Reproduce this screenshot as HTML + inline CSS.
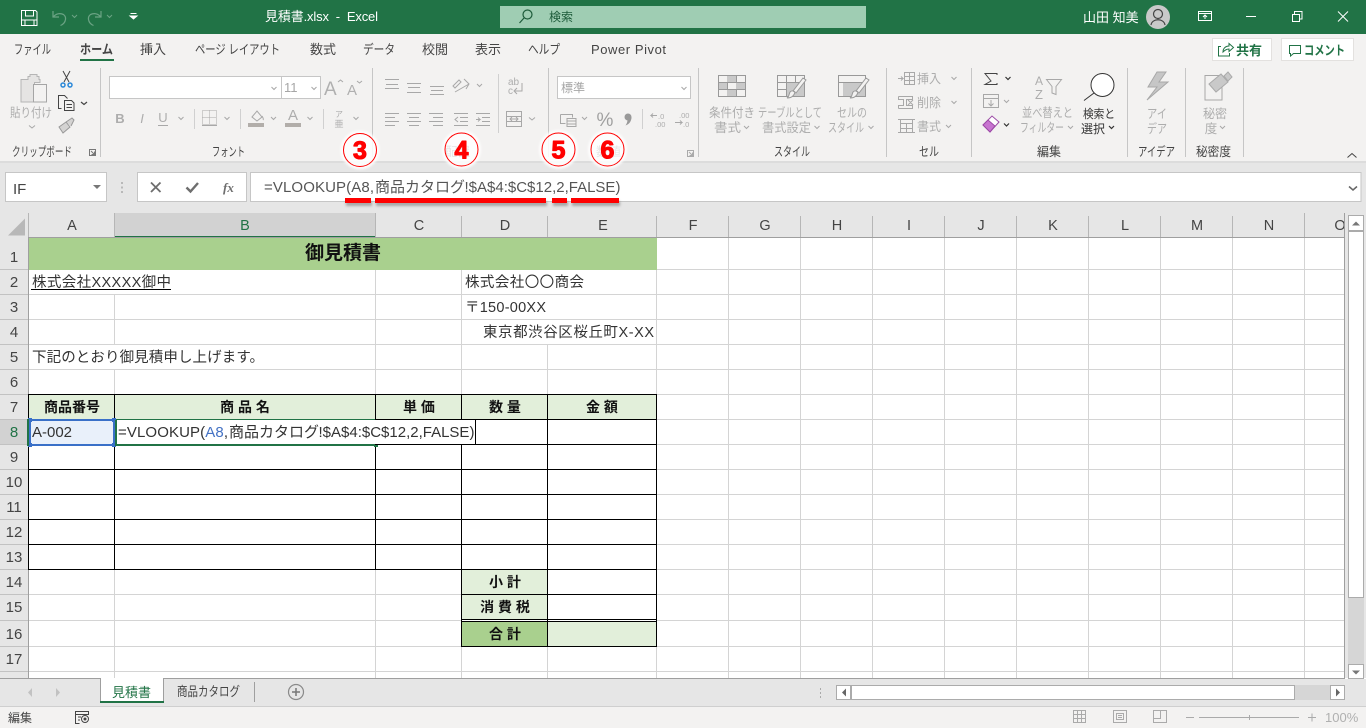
<!DOCTYPE html>
<html lang="ja"><head><meta charset="utf-8"><title>見積書.xlsx - Excel</title>
<style>
html,body{margin:0;padding:0;width:1366px;height:728px;overflow:hidden;background:#fff}
svg{display:block;font-family:"Liberation Sans","Noto Sans CJK JP",sans-serif}
.r{font-size:13px;fill:#444}
.d{font-size:12.500px;fill:#adadad}
.g{font-size:12.500px;fill:#444}
.c{font-size:14.500px;fill:#333}
.h{font-size:14px;font-weight:bold;fill:#111;text-anchor:middle}
.n{font-size:15px;fill:#444;text-anchor:middle}
.m{text-anchor:middle}
.i{fill:none;stroke:#a8a8a8;stroke-width:1}
.k{fill:none;stroke:#444;stroke-width:1}
.v{fill:none;stroke:#999;stroke-width:1}
.b{font-size:25px;font-weight:bold;fill:#f00;stroke:#f00;stroke-width:1.100;stroke-linejoin:round;text-anchor:middle}
</style></head><body>
<svg width="1366" height="728" viewBox="0 0 1366 728" xmlns="http://www.w3.org/2000/svg">
<defs>
<filter id="glow" x="-30%" y="-30%" width="160%" height="160%"><feGaussianBlur stdDeviation="1"/></filter>
<filter id="sh" x="-10%" y="-100%" width="120%" height="400%"><feGaussianBlur stdDeviation="1.200"/></filter>
</defs>
<rect width="1366" height="728" fill="#fff"/>
<!-- title bar -->
<rect width="1366" height="34" fill="#217346"/>
<path d="M21.500 10.500h14l1.500 1.500v13.500h-15.500zM25.500 10.500v5.500h8v-5.500M25 25.500v-5.500h9v5.500M21.500 20h16" fill="none" stroke="#fff"/>
<path d="M53 11v6h6M53.500 16.500c5-5 13-3 12 3-.5 3-2.500 5-5 6" fill="none" stroke="#6ba384" stroke-width="1.200"/>
<path d="M72 15l2.500 2.500 2.500-2.500M107 15l2.500 2.500 2.500-2.500" fill="none" stroke="#6ba384"/>
<path d="M101 11v6h-6M100.500 16.500c-5-5-13-3-12 3 .5 3 2.500 5 5 6" fill="none" stroke="#6ba384" stroke-width="1.200"/>
<path d="M130.500 13.500h6M130 16l3.500 3 3.500-3z" fill="#fff" stroke="#fff"/>
<text x="265" y="21" font-size="13" fill="#fff" textLength="113">見積書.xlsx&#160;&#160;-&#160;&#160;Excel</text>
<rect x="500" y="6" width="366" height="22" fill="#9fcdb3"/>
<circle cx="527.500" cy="14.500" r="4.500" fill="none" stroke="#1d5b3a" stroke-width="1.200"/>
<path d="M524 18l-4.500 5" stroke="#1d5b3a" stroke-width="1.200"/>
<text x="549" y="21" font-size="12" fill="#1d5b3a">検索</text>
<text x="1083" y="22" font-size="13" fill="#fff">山田&#160;知美</text>
<circle cx="1158" cy="17" r="12" fill="#c9c9c9"/>
<circle cx="1158" cy="14" r="4.500" fill="none" stroke="#444" stroke-width="1.200"/>
<path d="M1151 25c1-7 13-7 14 0" fill="none" stroke="#444" stroke-width="1.200"/>
<path d="M1198.500 11.500h13v9h-13zM1198.500 13.500h13M1205 19v-4M1203 17l2-2 2 2" fill="none" stroke="#fff"/>
<path d="M1246 16.500h10" stroke="#fff"/>
<path d="M1292.500 14.500h7v7h-7zM1294.500 14v-2.500h7.500v7.500h-2.500" fill="none" stroke="#fff"/>
<path d="M1338 11.500l10 10M1348 11.500l-10 10" stroke="#fff" stroke-width="1"/>
<!-- ribbon -->
<rect y="34" width="1366" height="128" fill="#f3f2f1"/>
<rect y="161" width="1366" height="52" fill="#e6e6e6"/>
<rect y="161" width="1366" height="2" fill="#dcdcdc"/>
<text x="14" y="54" class="r" textLength="37" lengthAdjust="spacingAndGlyphs">ファイル</text>
<text x="80" y="54" class="r" style="font-weight:bold" textLength="33" lengthAdjust="spacingAndGlyphs">ホーム</text>
<rect x="80" y="59" width="34" height="2" fill="#217346"/>
<text x="140" y="54" class="r">挿入</text>
<text x="195" y="54" class="r" textLength="85" lengthAdjust="spacingAndGlyphs">ページ レイアウト</text>
<text x="310" y="54" class="r">数式</text>
<text x="363" y="54" class="r" textLength="32" lengthAdjust="spacingAndGlyphs">データ</text>
<text x="422" y="54" class="r">校閲</text>
<text x="475" y="54" class="r">表示</text>
<text x="528" y="54" class="r" textLength="32" lengthAdjust="spacingAndGlyphs">ヘルプ</text>
<text x="591" y="54" class="r" textLength="75">Power Pivot</text>
<rect x="1212.500" y="38.500" width="59" height="22" fill="#fff" stroke="#e3e1df"/>
<path d="M1221 46.500h-2.500v9.500h11v-3M1223 52c0-4 3-6 6-6v-2.500l4.500 4-4.500 4v-2.500c-2 0-4 1-6 3z" fill="none" stroke="#217346"/>
<text x="1236" y="55" font-size="13" font-weight="bold" fill="#217346">共有</text>
<rect x="1281.500" y="38.500" width="72" height="22" fill="#fff" stroke="#e3e1df"/>
<path d="M1289.500 45.500h11v8h-7l-3 2.500v-2.500h-1z" fill="none" stroke="#217346"/>
<text x="1304" y="55" font-size="13" font-weight="bold" fill="#217346" textLength="41" lengthAdjust="spacingAndGlyphs">コメント</text>
<path d="M100.500 68v89M372.500 68v89M548.500 68v89M698.500 68v89M886.500 68v89M971.500 68v89M1127.500 68v89M1185.500 68v89M1243.500 68v89" stroke="#c6c6c6"/>
<path d="M194.500 109v20M240.500 109v20M323.500 109v20M498.500 74v59M642.500 109v20" stroke="#d0d0d0"/>
<!-- clipboard -->
<path d="M21 79.500h7v-3h2v-2h7v2h2v3h1v3h-5.500v19.500h-13.500z" fill="#e5e4e3" stroke="#b5b5b5"/>
<rect x="33.500" y="84.500" width="13" height="17.500" fill="#f3f2f1" stroke="#a5a5a5"/>
<text x="31" y="117" class="d m" textLength="42" lengthAdjust="spacingAndGlyphs">貼り付け</text>
<path d="M29 125.500l3 2.500 3-2.500" class="i"/>
<path d="M63 71l6 11M70 71l-6 11" stroke="#444" fill="none"/>
<circle cx="63" cy="85" r="2" fill="none" stroke="#2b88d8" stroke-width="1.500"/><circle cx="70" cy="85" r="2" fill="none" stroke="#2b88d8" stroke-width="1.500"/>
<path d="M61.500 108.500h-3v-13h6l3 3M64.500 100.500h7l2.500 2.500v7.500h-9.500zM66.500 104.500h5.500M66.500 107.500h5.500" class="k"/>
<path d="M81 102l3 2.500 3-2.500" stroke="#444" fill="none" stroke-width="1.200"/>
<path d="M59 127l4 6 7-6-4-5zM66 122l6-4 2 2-3 6" fill="#d4d3d2" stroke="#999"/>
<text x="12" y="156" class="g" textLength="60" lengthAdjust="spacingAndGlyphs">クリップボード</text>
<path d="M89.500 149.500h6v6h-6zM91 151l3 3M94.500 151.500v3h-3" stroke="#777" fill="none"/>
<!-- font -->
<rect x="109.500" y="76.500" width="172" height="22" fill="#fff" stroke="#c6c6c6"/>
<rect x="281.500" y="76.500" width="39" height="22" fill="#fff" stroke="#c6c6c6"/>
<path d="M271.500 87l2.500 2.500 2.500-2.500M311.500 87l2.500 2.500 2.500-2.500" class="i"/>
<text x="284" y="92" font-size="13" fill="#a6a6a6">11</text>
<text x="324" y="95" font-size="19" fill="#b0b0b0">A</text><path d="M338 82l2.500-2 2.500 2" class="i"/>
<text x="347" y="95" font-size="15" fill="#b0b0b0">A</text><path d="M357 81l2.500 2 2.500-2" class="i"/>
<text x="120" y="123" font-size="13" font-weight="bold" fill="#adadad" style="text-anchor:middle">B</text>
<text x="142" y="123" font-size="13" font-style="italic" fill="#adadad" style="text-anchor:middle">I</text>
<text x="163" y="122" font-size="13" fill="#adadad" style="text-anchor:middle">U</text><path d="M158 125.500h10" class="i"/>
<path d="M178.500 117l2.500 2.500 2.500-2.500M224.500 117l2.500 2.500 2.500-2.500M271 117l2.500 2.500 2.500-2.500M307.500 117l2.500 2.500 2.500-2.500M353.500 117l2.500 2.500 2.500-2.500" class="i"/>
<path d="M202.500 110.500h14v14h-14zM209.500 110.500v14M202.500 117.500h14" class="i" stroke-dasharray="1 1"/><path d="M202 125.500h15" class="i"/>
<path d="M252 117l5-6 5 6-5 4zM262 116c1 2 2 3 1 4" class="i" stroke="#999"/><rect x="248" y="123" width="16" height="4" fill="#b2aeaa"/>
<text x="293" y="120" font-size="15" fill="#adadad" style="text-anchor:middle">A</text><rect x="285" y="123" width="16" height="4" fill="#b2aeaa"/>
<text x="339" y="117" font-size="8" fill="#adadad" style="text-anchor:middle">ア</text><text x="339" y="127" font-size="9" fill="#adadad" style="text-anchor:middle">亜</text>
<text x="212" y="156" class="g" textLength="33" lengthAdjust="spacingAndGlyphs">フォント</text>
<!-- alignment -->
<path d="M385 79.500h14M386 84.500h12M385 88.500h14M407 83.500h14M408 87.500h12M407 92.500h14M430 86.500h14M431 90.500h12M430 94.500h14" class="i"/>
<path d="M385 113.500h14M385 117.500h10M385 121.500h14M385 125.500h10M407 113.500h14M409 117.500h10M407 121.500h14M409 125.500h10M429 113.500h14M433 117.500h10M429 121.500h14M433 125.500h10" class="i"/>
<path d="M454 113.500h14M460 117.500h8M460 121.500h8M454 125.500h14M458 117l-3 2.500 3 2.500M476 113.500h14M482 117.500h8M482 121.500h8M476 125.500h14M476 119.500h4l-2-2m2 2l-2 2" class="i"/>
<path d="M455 92l14-8M464 79l5 5-3 5M453 86l6-6 2 2-6 6z" class="i"/><path d="M477 84l2.500 2.500 2.500-2.500" class="i"/>
<text x="508" y="85" font-size="10" fill="#adadad">ab</text><text x="508" y="94" font-size="10" fill="#adadad">c</text><path d="M522 83v8h-7M517 88l-3 3 3 3" class="i"/>
<path d="M506.500 111.500h15v15h-15zM506.500 116.500h15M506.500 121.500h15M510 119h8M512 117l-2 2 2 2M516 117l2 2-2 2" class="i"/>
<path d="M529 117.500l3 2.500 3-2.500" class="i"/>
<text x="445" y="156" class="g">配置</text>
<!-- number -->
<rect x="557.500" y="76.500" width="133" height="22" fill="#fff" stroke="#c6c6c6"/>
<text x="561" y="92" font-size="12" fill="#a6a6a6">標準</text>
<path d="M681.500 87l2.500 2.500 2.500-2.500" class="i"/>
<path d="M560.500 114.500h12v3M560.500 114.500v9h5M567 118.500h9v8h-9zM567 121h9M567 124h9" class="i"/>
<path d="M582 117l2.500 2.500 2.500-2.500" class="i"/>
<text x="605" y="126" font-size="19" fill="#a0a0a0" style="text-anchor:middle">%</text>
<circle cx="628" cy="117" r="3.500" fill="#999"/><path d="M631.500 117c0 4-2 7-6 8.500 1.500-2 2-4 2-6z" fill="#999"/>
<text x="658" y="119" font-size="7.500" fill="#adadad">.0</text><text x="655" y="127" font-size="7.500" fill="#adadad">.00</text><path d="M657 115.500h-6l2-2m-2 2l2 2" class="i"/>
<text x="679" y="118" font-size="7.500" fill="#adadad">.00</text><text x="683" y="127" font-size="7.500" fill="#adadad">.0</text><path d="M675 122.500h7l-2-2m2 2l-2 2" class="i"/>
<text x="596" y="156" class="g">数値</text>
<path d="M687.500 150.500h6v6h-6zM689 152l3 3M692.500 152.500v3h-3" stroke="#aaa" fill="none"/>
<!-- styles -->
<path d="M718.500 75.500h27v21h-27zM718.500 82.500h27M718.500 89.500h27M727.500 75.500v21M736.500 75.500v21" class="v"/><path d="M727 76h9v6h-9zM736 83h9v6h-9zM719 83h8v6h-8zM727 90h9v6h-9z" fill="#c9c9c9"/>
<path d="M777.500 75.500h27v21h-27zM777.500 82.500h27M777.500 89.500h27M786.500 75.500v21M795.500 75.500v21" class="v"/><rect x="787" y="83" width="17" height="13" fill="#c9c9c9"/>
<path d="M838.500 75.500h27v21h-27zM838.500 82.500h27" class="v"/><rect x="843" y="83" width="22" height="13" fill="#c9c9c9"/>
<path d="M806 80l-10 13-3-2 10-13zM795 92c-1 4-4 6-8 6 2-1 2-4 3-6 2-2 4-1 5 0zM869 80l-10 13-3-2 10-13zM858 92c-1 4-4 6-8 6 2-1 2-4 3-6 2-2 4-1 5 0z" fill="#f3f2f1" stroke="#999"/>
<text x="732" y="117" class="d m" textLength="46" lengthAdjust="spacingAndGlyphs">条件付き</text><text x="727.500" y="132" class="d m" textLength="27" lengthAdjust="spacingAndGlyphs">書式</text><path d="M744 126l2.500 2.500 2.500-2.500" class="i"/>
<text x="790" y="117" class="d m" textLength="64" lengthAdjust="spacingAndGlyphs">テーブルとして</text><text x="786.500" y="132" class="d m" textLength="49" lengthAdjust="spacingAndGlyphs">書式設定</text><path d="M814.500 126l2.500 2.500 2.500-2.500" class="i"/>
<text x="852" y="117" class="d m" textLength="30" lengthAdjust="spacingAndGlyphs">セルの</text><text x="846" y="132" class="d m" textLength="36" lengthAdjust="spacingAndGlyphs">スタイル</text><path d="M868.500 126l2.500 2.500 2.500-2.500" class="i"/>
<text x="774" y="156" class="g" textLength="36" lengthAdjust="spacingAndGlyphs">スタイル</text>
<!-- cells -->
<path d="M904.500 72.500h10v12h-10zM904.500 76.500h10M904.500 80.500h10M909.500 72.500v12M898 78.500h5l-2-2m2 2l-2 2" class="i"/>
<path d="M898.500 96.500h14v3h-6v6h6v3h-14M898.500 96.500v3h5v6h-5v3M908 100l5 5M913 100l-5 5" class="i"/>
<path d="M900.500 119.500h12v13h-12zM900.500 123.500h12M900.500 128.500h12M906.500 123.500v9M898 119.500h17M898 132.500h17" class="i"/>
<text x="917" y="83" class="d" textLength="24" lengthAdjust="spacingAndGlyphs">挿入</text><text x="917" y="107" class="d" textLength="24" lengthAdjust="spacingAndGlyphs">削除</text><text x="917" y="131" class="d" textLength="24" lengthAdjust="spacingAndGlyphs">書式</text>
<path d="M951.500 77l2.500 2.500 2.500-2.500M951.500 101l2.500 2.500 2.500-2.500M946 125l2.500 2.500 2.500-2.500" class="i"/>
<text x="919" y="156" class="g" textLength="20" lengthAdjust="spacingAndGlyphs">セル</text>
<!-- editing -->
<path d="M997 75v-1.500h-12l6 7.500-6 3.500h12v-1.500" class="k"/>
<path d="M1005.500 77l2.500 2.500 2.500-2.500" stroke="#333" fill="none" stroke-width="1.200"/>
<path d="M983.500 94.500h15v13h-15zM983.500 98.500h15M991 100v6M988.500 103.500l2.500 2.500 2.500-2.500" class="i"/><path d="M1004 100l2.500 2.500 2.500-2.500" class="i"/>
<path d="M983 125l9-9 7 6-9 10z" fill="#fff" stroke="#9c4aa6"/><path d="M983 125l5-5 7 6-5 6z" fill="#c774d0" stroke="#9c4aa6"/>
<path d="M1004 123.500l2.500 2.500 2.500-2.500" stroke="#333" fill="none" stroke-width="1.200"/>
<text x="1039" y="85" font-size="12" fill="#adadad" style="text-anchor:middle">A</text><text x="1039" y="99" font-size="13" fill="#adadad" style="text-anchor:middle">Z</text>
<path d="M1046.500 79.500h15l-5.500 7v8l-4-1.500v-6.500z" class="i"/>
<text x="1047.500" y="117" class="d m" textLength="51" lengthAdjust="spacingAndGlyphs">並べ替えと</text><text x="1042" y="132" class="d m" textLength="44" lengthAdjust="spacingAndGlyphs">フィルター</text><path d="M1068 126l2.500 2.500 2.500-2.500" class="i"/>
<circle cx="1102.500" cy="85" r="11.500" fill="#fff" stroke="#333" stroke-width="1"/><path d="M1094 93l-10 7.500" stroke="#333"/>
<text x="1099" y="118" font-size="12" fill="#333" style="text-anchor:middle" textLength="32" lengthAdjust="spacingAndGlyphs">検索と</text><text x="1093" y="133" font-size="12" fill="#333" style="text-anchor:middle">選択</text><path d="M1109 126l2.500 2.500 2.500-2.500" stroke="#333" fill="none" stroke-width="1.200"/>
<text x="1037" y="156" class="g" textLength="24" lengthAdjust="spacingAndGlyphs">編集</text>
<!-- ideas -->
<path d="M1157 72l-9 15h9l-10 13 21-18h-9l7-10z" fill="#c6c6c6" stroke="#a8a8a8"/>
<text x="1157" y="118" class="d m" textLength="20" lengthAdjust="spacingAndGlyphs">アイ</text><text x="1157" y="133" class="d m" textLength="20" lengthAdjust="spacingAndGlyphs">デア</text>
<text x="1138" y="156" class="g" textLength="37" lengthAdjust="spacingAndGlyphs">アイデア</text>
<!-- sensitivity -->
<path d="M1205 75.500h17v24.500h-17z" class="i"/>
<path d="M1209 84l12-10 7 8-12 10z" fill="#c9c9c9" stroke="#aaa"/><path d="M1224 76l4-4 4 5-4 4z" fill="#c9c9c9" stroke="#aaa"/>
<text x="1215" y="118" class="d m" textLength="24" lengthAdjust="spacingAndGlyphs">秘密</text><text x="1211" y="133" class="d m">度</text><path d="M1220 126l2.500 2.500 2.500-2.500" class="i"/>
<text x="1196" y="156" class="g" textLength="35" lengthAdjust="spacingAndGlyphs">秘密度</text>
<path d="M1347.500 157.500l4.500-4 4.500 4" stroke="#444" fill="none"/>
<!-- formula bar -->
<rect x="5.500" y="172.500" width="101" height="29" fill="#fff" stroke="#c6c6c6"/>
<text x="13" y="194" font-size="15" fill="#444">IF</text>
<path d="M93 185h8l-4 4z" fill="#777"/>
<path d="M122 182v2M122 186.500v2M122 191v2" stroke="#aaa" stroke-width="1.500"/>
<rect x="137.500" y="172.500" width="109" height="29" fill="#fff" stroke="#c6c6c6"/>
<path d="M151 182.500l9.500 9.500M160.500 182.500l-9.500 9.500" stroke="#6e6e6e" stroke-width="1.800"/>
<path d="M186.500 187.500l4 4 7.500-8.500" stroke="#6e6e6e" stroke-width="2.400" fill="none"/>
<text x="223" y="192" font-size="13" font-style="italic" font-weight="bold" fill="#6e6e6e" font-family="Liberation Serif">fx</text>
<rect x="250.500" y="172.500" width="1110.500" height="29" fill="#fff" stroke="#c6c6c6"/>
<text x="264" y="192" font-size="15" fill="#555" textLength="110">=VLOOKUP(A8,</text>
<text x="375" y="192" font-size="15" fill="#555">商品カタログ</text>
<text x="464.500" y="192" font-size="15" fill="#555">!$A$4:$C$12,2,FALSE)</text>
<path d="M1349 186.500l4 3.500 4-3.500" stroke="#666" stroke-width="1.500" fill="none"/>
<!-- headers -->
<rect y="213" width="1345" height="25" fill="#e6e6e6"/>
<rect y="238" width="29" height="441" fill="#e6e6e6"/>
<rect x="115" y="213" width="261" height="24" fill="#d2d2d2"/>
<rect x="115" y="236" width="261" height="2" fill="#217346"/>
<rect y="420" width="28" height="25" fill="#d2d2d2"/>
<path d="M25 218.500v17h-17z" fill="#b8b8b8"/>
<path d="M28.500 213v24M114.500 213v24M375.500 213v24M461.500 216v21M547.500 216v21M656.500 216v21M728.500 216v21M800.500 216v21M872.500 216v21M944.500 216v21M1016.500 216v21M1088.500 216v21M1160.500 216v21M1232.500 216v21M1304.500 213v24" stroke="#b6b6b6"/>
<path d="M0 269.500h28M0 294.500h28M0 319.500h28M0 344.500h28M0 369.500h28M0 394.500h28M0 419.500h28M0 444.500h28M0 469.500h28M0 494.500h28M0 519.500h28M0 544.500h28M0 569.500h28M0 594.500h28M0 620.500h28M0 646.500h28M0 671.500h28" stroke="#c2c2c2"/>
<path d="M28.500 237v441M29 237.500h1316" stroke="#9f9f9f"/>
<g font-size="14.500" fill="#444" text-anchor="middle">
<text x="72" y="230">A</text><text x="245" y="230" fill="#217346">B</text><text x="419" y="230">C</text><text x="505" y="230">D</text><text x="603" y="230">E</text><text x="693" y="230">F</text><text x="765" y="230">G</text><text x="837" y="230">H</text><text x="909" y="230">I</text><text x="981" y="230">J</text><text x="1053" y="230">K</text><text x="1125" y="230">L</text><text x="1197" y="230">M</text><text x="1269" y="230">N</text><text x="1340" y="230">O</text>
</g>
<text x="14" y="262" class="n">1</text><text x="14" y="287" class="n">2</text><text x="14" y="312" class="n">3</text><text x="14" y="337" class="n">4</text><text x="14" y="362" class="n">5</text><text x="14" y="387" class="n">6</text><text x="14" y="412" class="n">7</text><text x="14" y="437" class="n" style="fill:#217346">8</text><text x="14" y="462" class="n">9</text><text x="14" y="487" class="n">10</text><text x="14" y="512" class="n">11</text><text x="14" y="537" class="n">12</text><text x="14" y="562" class="n">13</text><text x="14" y="587" class="n">14</text><text x="14" y="612" class="n">15</text><text x="14" y="639" class="n">16</text><text x="14" y="664" class="n">17</text>
<!-- fills -->
<rect x="29" y="238" width="628" height="32" fill="#a9d08e"/>
<rect x="29" y="395" width="628" height="24" fill="#e2efda"/>
<rect x="462" y="570" width="86" height="50" fill="#e2efda"/>
<rect x="462" y="621" width="86" height="25" fill="#a9d08e"/>
<rect x="548" y="621" width="109" height="25" fill="#e2efda"/>
<!-- gridlines -->
<path d="M657 269.500h688M29 294.500h1316M29 319.500h1316M29 344.500h1316M29 369.500h1316M29 394.500h1316M657 419.500h688M657 444.500h688M657 469.500h688M657 494.500h688M657 519.500h688M657 544.500h688M657 569.500h688M29 594.500h432M657 594.500h688M29 620.500h432M657 620.500h688M29 646.500h432M657 646.500h688M29 671.500h1316" stroke="#d4d4d4"/>
<path d="M114.500 295v50M114.500 370v25M114.500 570v108M375.500 270v125M375.500 570v108M461.500 270v125M461.500 646v32M547.500 345v50M547.500 646v32M656.500 270v125M656.500 646v32M728.500 238v440M800.500 238v440M872.500 238v440M944.500 238v440M1016.500 238v440M1088.500 238v440M1160.500 238v440M1232.500 238v440M1304.500 238v440" stroke="#d4d4d4"/>
<path d="M1344.500 213v465" stroke="#9f9f9f"/>
<!-- black table -->
<path d="M29 394.500h628M29 419.500h628M29 444.500h628M29 469.500h628M29 494.500h628M29 519.500h628M29 544.500h628M29 569.500h628M461 594.500h196M461 619.500h196M461 621.500h196M461 646.500h196M114.500 394v176M375.500 394v176M461.500 394v253M547.500 394v253M656.500 394v253M28.500 394v176" stroke="#000"/>
<!-- cell text -->
<text x="343" y="259" font-size="19" font-weight="bold" fill="#111" text-anchor="middle">御見積書</text>
<text x="32" y="287" class="c" textLength="139">株式会社XXXXX御中</text><path d="M31 289.500h140" stroke="#000"/>
<text x="465" y="287" class="c" textLength="119">株式会社〇〇商会</text>
<text x="465" y="312" class="c" textLength="81">〒150-00XX</text>
<text x="483" y="337" class="c" textLength="171">東京都渋谷区桜丘町X-XX</text>
<text x="32" y="362" class="c" textLength="232">下記のとおり御見積申し上げます。</text>
<text x="72" y="412" class="h">商品番号</text><text x="245" y="412" class="h">商 品 名</text><text x="419" y="412" class="h">単 価</text><text x="505" y="412" class="h">数 量</text><text x="602" y="412" class="h">金 額</text>
<text x="505" y="587" class="h">小 計</text><text x="505" y="612" class="h">消 費 税</text><text x="505" y="639" class="h">合 計</text>
<!-- edit -->
<rect x="30" y="420" width="84" height="24" fill="#e9f0fa"/>
<rect x="30" y="419" width="84" height="2" fill="#3a70c8"/><rect x="30" y="444" width="84" height="2" fill="#3a70c8"/><rect x="29" y="419" width="2" height="27" fill="#3a70c8"/><rect x="113" y="419" width="2" height="27" fill="#3a70c8"/>
<path d="M28 418h4v4h-4zM28 443h4v4h-4zM112 418h4v4h-4zM112 443h4v4h-4z" fill="#3a70c8"/>
<text x="32" y="437" font-size="15" fill="#333" textLength="40">A-002</text>
<rect x="116" y="420" width="359" height="24" fill="#fff"/>
<path d="M375 419.500H116" stroke="#217346"/>
<rect x="115" y="420" width="2" height="25" fill="#217346"/>
<rect x="115" y="444" width="262" height="2" fill="#217346"/>
<rect x="374" y="444" width="4" height="3" fill="#217346"/>
<rect x="27" y="419" width="2" height="27" fill="#217346"/>
<path d="M475.500 420v24M375 444.500h101" stroke="#000"/>
<text x="118" y="437" font-size="15" fill="#333" textLength="110">=VLOOKUP(<tspan fill="#4472c4">A8</tspan>,</text>
<text x="229" y="437" font-size="15" fill="#333">商品カタログ</text>
<text x="318.500" y="437" font-size="15" fill="#333">!$A$4:$C$12,2,FALSE)</text>
<!-- badges -->
<g filter="url(#glow)" fill="#fff" fill-opacity=".86">
<circle cx="360" cy="150" r="19.500"/><circle cx="461.500" cy="149.500" r="19.500"/><circle cx="558.500" cy="149.500" r="19.500"/><circle cx="607.500" cy="149.500" r="19.500"/>
</g>
<g fill="none" stroke="#f00">
<circle cx="360" cy="150" r="16.500"/><circle cx="461.500" cy="149.500" r="16.500"/><circle cx="558.500" cy="149.500" r="16.500"/><circle cx="607.500" cy="149.500" r="16.500"/>
</g>
<text x="360" y="159" class="b">3</text><text x="461.500" y="158.500" class="b">4</text><text x="558.500" y="158.500" class="b">5</text><text x="607.500" y="158.500" class="b">6</text>
<!-- red underline -->
<path d="M346 201h26v5h-26zM376 201h171v5h-171zM553 201h15v5h-15zM572 201h48v5h-48z" fill="#000" fill-opacity=".28" filter="url(#sh)"/>
<path d="M345 198h26v5h-26zM375 198h171v5h-171zM552 198h15v5h-15zM571 198h48v5h-48z" fill="#f00"/>
<!-- vertical scrollbar -->
<rect x="1345" y="213" width="21" height="465" fill="#e6e6e6"/>
<rect x="1348.500" y="215.500" width="15" height="15" fill="#fff" stroke="#ababab"/>
<path d="M1352 225.500l4-4 4 4z" fill="#777"/>
<rect x="1348" y="231" width="16" height="433" fill="#d6d6d6"/>
<rect x="1348.500" y="231.500" width="15" height="366" fill="#fff" stroke="#ababab"/>
<rect x="1348.500" y="664.500" width="15" height="14" fill="#fff" stroke="#ababab"/>
<path d="M1352 670.500h8l-4 4z" fill="#777"/>
<!-- tabs -->
<rect y="679" width="1366" height="27" fill="#e6e6e6"/>
<path d="M0 678.500h1345" stroke="#9f9f9f"/>
<path d="M32 688v9l-4-4.500zM56 688v9l4-4.500z" fill="#c2c2c2"/>
<path d="M100.500 679v23M163.500 679v23" stroke="#9f9f9f"/>
<rect x="101" y="678" width="62" height="23" fill="#fff"/>
<rect x="100" y="701" width="64" height="2" fill="#217346"/>
<text x="112" y="697" font-size="13" fill="#217346">見積書</text>
<text x="177" y="696" font-size="13" fill="#444" textLength="63" lengthAdjust="spacingAndGlyphs">商品カタログ</text>
<path d="M254.500 682v20" stroke="#9f9f9f"/>
<circle cx="296" cy="692" r="7.500" fill="none" stroke="#8a8a8a" stroke-width="1.200"/><path d="M292 692h8M296 688v8" stroke="#777" stroke-width="1.500"/>
<path d="M820.500 688v2M820.500 692v2M820.500 696v2" stroke="#aaa"/>
<rect x="836.500" y="685.500" width="14" height="14" fill="#fff" stroke="#ababab"/>
<path d="M846 688.500v8l-4-4z" fill="#666"/>
<rect x="851" y="685" width="479" height="15" fill="#d6d6d6"/>
<rect x="851.500" y="685.500" width="443" height="14" fill="#fff" stroke="#ababab"/>
<rect x="1330.500" y="685.500" width="14" height="14" fill="#fff" stroke="#ababab"/>
<path d="M1336 688.500v8l4-4z" fill="#666"/>
<!-- status -->
<rect y="706" width="1366" height="22" fill="#f3f2f1"/>
<path d="M0 706.500h1366" stroke="#cfcfcf"/>
<text x="8" y="722" font-size="12" fill="#444">編集</text>
<path d="M75.500 711.500h13v3h-13zM75.500 714.500v9h4M78 717h3M78 720h2" stroke="#444" fill="none"/><circle cx="85" cy="719" r="3.500" fill="none" stroke="#444"/><circle cx="85" cy="719" r="1.500" fill="#444"/>
<path d="M1073.500 710.500h12v12h-12zM1077.500 710.500v12M1081.500 710.500v12M1073.500 714.500h12M1073.500 718.500h12" fill="none" stroke="#aaa"/>
<path d="M1113.500 710.500h13v12h-13zM1116.500 713.500h7v6h-7zM1118 715.500h4M1118 717.500h4" fill="none" stroke="#aaa"/>
<path d="M1153.500 710.500h13v12h-13zM1153.500 718.500h7v-8" fill="none" stroke="#aaa"/>
<path d="M1186 717.500h8M1199 717.500h100M1308 717.500h8M1312 713.500v8M1249.500 715v5" stroke="#aaa"/>
<text x="1325" y="722" font-size="13" fill="#b0b0b0">100%</text>
</svg>
</body></html>
